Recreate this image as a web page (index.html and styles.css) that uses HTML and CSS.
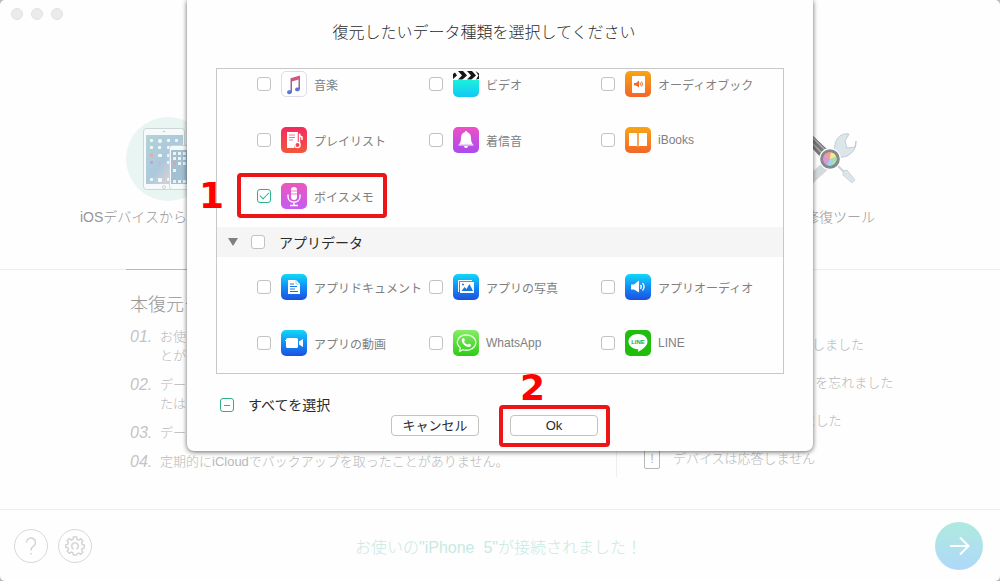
FILE: index.html
```html
<!DOCTYPE html>
<html lang="ja">
<head>
    <meta charset="UTF-8">
    <meta name="viewport" content="width=device-width, initial-scale=1.0">
    <title>復元したいデータ種類を選択してください</title>
    <link rel="stylesheet" href="styles.css">
</head>
<body>
    <div class="window">
        <header class="titlebar">
            <span class="dot"></span>
            <span class="dot"></span>
            <span class="dot"></span>
        </header>

        <nav class="modes">
            <a href="#device" class="mode active">
                <svg class="mode-icon" viewBox="0 0 84 84">
                    <defs>
                        <linearGradient id="screen" x1="0" y1="0" x2="1" y2="1">
                            <stop offset="0" stop-color="#b4d2d6"/>
                            <stop offset=".5" stop-color="#abc9dc"/>
                            <stop offset=".75" stop-color="#d3d0d6"/>
                            <stop offset="1" stop-color="#a9c4d8"/>
                        </linearGradient>
                    </defs>
                    <circle cx="42" cy="42" r="42" fill="#e9f5f3"/>
                    <rect x="17.500" y="11.500" width="41" height="61" rx="3" fill="#f7fafa" stroke="#ccd6d6"/>
                    <rect x="20" y="18" width="37" height="49" fill="url(#screen)"/>
                    <circle cx="38" cy="14.500" r=".7" fill="#9aa"/>
                    <circle cx="38" cy="70" r="1.500" fill="none" stroke="#ccd6d6"/>
                    <g fill="#f3fafa">
                        <rect x="24" y="22" width="3" height="3" rx="1"/><rect x="32" y="22" width="4" height="4" rx="2"/><rect x="41" y="22" width="3" height="3" rx="1"/><rect x="49" y="22" width="3" height="3" rx="1"/>
                        <rect x="24" y="29" width="3" height="3" rx="1"/><rect x="32" y="29" width="3" height="3" rx="1"/><rect x="41" y="29" width="3" height="3" rx="1"/>
                        <rect x="32" y="37" width="4" height="3" rx="1"/><rect x="41" y="37" width="3" height="3" rx="1"/><rect x="41" y="44" width="3" height="3" rx="1"/>
                        <rect x="24" y="61" width="3" height="3" rx="1"/><rect x="32" y="61" width="4" height="4" rx="1"/><rect x="41" y="61" width="3" height="3" rx="1"/>
                    </g>
                    <rect x="24" y="37" width="3" height="3" rx="1" fill="#e0a8b2"/>
                    <rect x="24" y="44" width="3" height="3" rx="1" fill="#b9a5d3"/>
                    <rect x="32" y="44" width="3" height="3" rx="1" fill="#c3b5dc"/>
                    <rect x="43.500" y="28.500" width="25" height="44" rx="3" fill="#f7fafa" stroke="#ccd6d6"/>
                    <rect x="45" y="33" width="22" height="34" fill="#a3bfd2"/>
                    <g fill="#e9f4f4">
                        <rect x="47" y="35" width="3" height="3"/><rect x="52" y="35" width="3" height="3"/><rect x="57" y="35" width="3" height="3"/>
                        <rect x="47" y="40" width="3" height="3"/><rect x="52" y="40" width="3" height="3"/><rect x="57" y="40" width="3" height="3"/>
                        <rect x="52" y="45" width="3" height="3"/><rect x="57" y="45" width="3" height="3"/><rect x="47" y="52" width="3" height="3"/>
                        <rect x="47" y="63" width="3" height="3"/><rect x="52" y="63" width="3" height="3"/><rect x="57" y="63" width="3" height="3"/>
                    </g>
                    <rect x="47" y="45" width="3" height="3" fill="#dfa2b0"/>
                </svg>
                <span>iOSデバイスから</span>
            </a>
            <a href="#repair" class="mode tools">
                <svg class="mode-icon" viewBox="0 0 84 84">
                    <path d="M14 20l7-5 21 20-7 8z" fill="#777"/>
                    <path d="M16 18l21 21M20 16l20 20" stroke="#aaa" stroke-width="1.500"/>
                    <path d="M14 70L53 35" stroke="#d3dade" stroke-width="9"/>
                    <path d="M47 35C45 25 51 15 61 17l-4 7 2 7 8-1 1-6C69 34 60 41 52 40z" fill="#dbe5ea" stroke="#b9c4ca" stroke-width=".8"/>
                    <path d="M48 47l9 9" stroke="#ccd4d8" stroke-width="2"/>
                    <path d="M55 54l4-1 8 10-3 3-9-8z" fill="#dce5e9" stroke="#c3cdd2" stroke-width=".8"/>
                    <circle cx="42" cy="42" r="11" fill="#fff"/>
                    <circle cx="42" cy="42" r="9.800" fill="#858a8d"/>
                    <circle cx="42" cy="42" r="6.500" fill="#f5dc8b"/>
                    <path d="M42 42L36 39a6.500 6.500 0 0 1 7-3.500z" fill="#f19aa0"/>
                    <path d="M42 42l1-6.500a6.500 6.500 0 0 1 5 4z" fill="#f5ec91"/>
                    <path d="M42 42l6-2.500a6.500 6.500 0 0 1-2 7.500z" fill="#a5dfb1"/>
                    <path d="M42 42l4 5a6.500 6.500 0 0 1-7 1z" fill="#9ad6ef"/>
                    <path d="M42 42l-3 6a6.500 6.500 0 0 1-3-9z" fill="#d798d9"/>
                </svg>
                <span>修復ツール</span>
            </a>
        </nav>

        <main class="content">
            <section class="guide">
                <h2>本復元モード</h2>
                <ol class="steps">
                    <li><em>01.</em><span>お使い<br>とが</span></li>
                    <li><em>02.</em><span>データ<br>たは</span></li>
                    <li><em>03.</em><span>データ</span></li>
                    <li><em>04.</em><span>定期的にiCloudでバックアップを取ったことがありません。</span></li>
                </ol>
            </section>
            <ul class="cases">
                <li class="update"><span class="case-icon"></span><span>失敗しました</span></li>
                <li><span class="case-icon"></span><span>スクリーンのパスワードを忘れました</span></li>
                <li><span class="case-icon"></span><span>デバイスはロックされました</span></li>
                <li><span class="case-icon">!</span><span>デバイスは応答しません</span></li>
            </ul>
        </main>

        <footer class="statusbar">
            <div class="tools-left">
                <button type="button" class="round" aria-label="ヘルプ">
                    <svg viewBox="0 0 20 20"><path d="M5.500 6.500a4.500 4.500 0 1 1 7 3.700c-1.700 1.100-2.500 1.700-2.500 4.300M10 17v1.500"/></svg>
                </button>
                <button type="button" class="round" aria-label="設定">
                    <svg viewBox="0 0 20 20"><path d="M8.500 1h3l.6 2.400 1.500.7L15.800 2.800l2 2.100-1.200 2.200.6 1.400 2.300.6v2.800l-2.300.7-.6 1.400 1.200 2.200-2 2-2.200-1.200-1.500.7L11.500 19h-3l-.6-2.300-1.500-.7-2.200 1.200-2-2L3.400 13l-.6-1.400L.5 11V8.800l2.300-.5.6-1.400-1.200-2.200 2-1.900 2.200 1.300 1.500-.7z"/><path d="M8.500 13a3.300 3.300 0 1 1 3 0"/></svg>
                </button>
            </div>
            <p class="status">お使いの"iPhone&nbsp; 5"が接続されました！</p>
            <button type="button" class="next" aria-label="次へ">
                <svg viewBox="0 0 24 24"><path d="M3 12h18M13 3.500l8.500 8.500-8.500 8.500"/></svg>
            </button>
        </footer>
    </div>

    <form class="dialog" role="dialog" aria-labelledby="dialog-title">
        <h1 id="dialog-title">復元したいデータ種類を選択してください</h1>

        <div class="types">
            <div class="grid">
                <label class="type">
                    <input type="checkbox">
                    <svg class="icon" viewBox="0 0 26 26">
                        <defs><linearGradient id="note" x1="0" y1="0" x2="0" y2="1"><stop offset="0" stop-color="#e9536b"/><stop offset=".5" stop-color="#9b5fa9"/><stop offset="1" stop-color="#3f7fe0"/></linearGradient></defs>
                        <rect x=".5" y=".5" width="25" height="25" rx="4.500" fill="#fff" stroke="#dcdcea"/>
                        <path d="M9.500 7.200L19 4.500v13.200c0 3.200-5 3.400-5 .8 0-1.800 2-2.300 3.500-2V8.500l-6.500 2v10.200c0 3.200-5 3.200-5 .6 0-1.800 2-2.300 3.500-2z" fill="url(#note)"/>
                    </svg>
                    <span>音楽</span>
                </label>
                <label class="type">
                    <input type="checkbox">
                    <svg class="icon" viewBox="0 0 26 26">
                        <defs><linearGradient id="cyan" x1="0" y1="0" x2="0" y2="1"><stop offset="0" stop-color="#1cf0dc"/><stop offset="1" stop-color="#10c8f6"/></linearGradient></defs>
                        <path d="M0 9h26v12a5 5 0 0 1-5 5H5a5 5 0 0 1-5-5z" fill="url(#cyan)"/>
                        <path d="M0 5a5 5 0 0 1 5-5h16a5 5 0 0 1 5 5v4H0z" fill="#fff"/>
                        <path d="M0 3l2-1.500L4 4.500 0 8zM5 0h5l4 4.500L9.500 8.500H5l4-4zM14 0h5l4 4.500-4.500 4H14l4-4zM22.500 0l3.500 2.500V8l-3 .5 2.500-4z" fill="#161616"/>
                    </svg>
                    <span>ビデオ</span>
                </label>
                <label class="type">
                    <input type="checkbox">
                    <svg class="icon" viewBox="0 0 26 26">
                        <defs><linearGradient id="orange" x1="0" y1="0" x2="0" y2="1"><stop offset="0" stop-color="#f9a514"/><stop offset="1" stop-color="#f2662a"/></linearGradient></defs>
                        <rect width="26" height="26" rx="5" fill="url(#orange)"/>
                        <rect x="7" y="5" width="13" height="17" rx="1" fill="#fff"/>
                        <path d="M9 12h2l3-2.500v7L11 14.500H9z" fill="#ee6b2a"/>
                        <path d="M15 11.500q1 1.500 0 3M16.500 10.500q2 2.500 0 5" fill="none" stroke="#ee6b2a"/>
                    </svg>
                    <span>オーディオブック</span>
                </label>
                <label class="type">
                    <input type="checkbox">
                    <svg class="icon" viewBox="0 0 26 26">
                        <defs><linearGradient id="red" x1="0" y1="0" x2="0" y2="1"><stop offset="0" stop-color="#f22b60"/><stop offset="1" stop-color="#f4563b"/></linearGradient></defs>
                        <rect width="26" height="26" rx="5" fill="url(#red)"/>
                        <path d="M6 5h11v11c-3 0-4 2-3.500 5H6z" fill="#fff"/>
                        <path d="M8 8h6M8 10.500h6M8 13h4" stroke="#f4788d"/>
                        <path d="M18.500 6v12" stroke="#f22f56" stroke-width="3.500"/>
                        <path d="M18.500 18V6.500q0 3 2.500 3.500v3" fill="none" stroke="#fff" stroke-width="1.500"/>
                        <circle cx="16.500" cy="18" r="2.600" fill="#f24450" stroke="#fff" stroke-width="1.300"/>
                    </svg>
                    <span>プレイリスト</span>
                </label>
                <label class="type">
                    <input type="checkbox">
                    <svg class="icon" viewBox="0 0 26 26">
                        <defs><linearGradient id="purple" x1="0" y1="0" x2="0" y2="1"><stop offset="0" stop-color="#ee50c5"/><stop offset="1" stop-color="#a94bf0"/></linearGradient></defs>
                        <rect width="26" height="26" rx="5" fill="url(#purple)"/>
                        <path d="M13 4c.8 0 1.200.6 1.200 1.300C17 6 18 8.500 18 11c0 3.500.8 5 2 6.500H6C7.200 16 8 14.500 8 11c0-2.500 1-5 3.800-5.700C11.800 4.600 12.200 4 13 4zM11 19h4c0 2.500-4 2.500-4 0z" fill="#fff"/>
                        <path d="M5.500 18h15" stroke="#fff"/>
                    </svg>
                    <span>着信音</span>
                </label>
                <label class="type">
                    <input type="checkbox">
                    <svg class="icon" viewBox="0 0 26 26">
                        <rect width="26" height="26" rx="5" fill="url(#orange)"/>
                        <path d="M4 6h7.500l1.500 1 1.500-1H22v13h-7.500l-1.500.8-1.500-.8H4z" fill="#fff"/>
                        <path d="M13 6.500V20" stroke="#f28a1f" stroke-width="1.500"/>
                    </svg>
                    <span>iBooks</span>
                </label>
                <label class="type marked">
                    <input type="checkbox" checked>
                    <svg class="icon" viewBox="0 0 26 26">
                        <defs><linearGradient id="pink" x1="0" y1="0" x2="0" y2="1"><stop offset="0" stop-color="#ea58bd"/><stop offset="1" stop-color="#c55cf2"/></linearGradient></defs>
                        <rect width="26" height="26" rx="5" fill="url(#pink)"/>
                        <rect x="10" y="4" width="6" height="13" rx="3" fill="#fff"/>
                        <path d="M10 8h6M10 11h6" stroke="#e65ac9" stroke-width=".8"/>
                        <path d="M7 11.500v2c0 7.500 12 7.500 12 0v-2M13 19v3.500M9 22.500h8" fill="none" stroke="#fff" stroke-width="1.400"/>
                    </svg>
                    <span>ボイスメモ</span>
                    <span class="frame"><b class="number">1</b></span>
                </label>
            </div>

            <div class="group">
                <span class="arrow"></span>
                <label><input type="checkbox">アプリデータ</label>
            </div>

            <div class="grid apps">
                <label class="type">
                    <input type="checkbox">
                    <svg class="icon" viewBox="0 0 26 26">
                        <defs><linearGradient id="blue" x1="0" y1="0" x2="0" y2="1"><stop offset="0" stop-color="#10d8fa"/><stop offset=".5" stop-color="#138df4"/><stop offset="1" stop-color="#1d50e0"/></linearGradient></defs>
                        <rect width="26" height="26" rx="5" fill="url(#blue)"/>
                        <path d="M7 6h8l4 4v10H7z" fill="#fff"/>
                        <path d="M15 6v4h4" fill="none" stroke="#8ccdf8" stroke-width=".8"/>
                        <path d="M9 10h4M9 12.500h7M9 15h5M9 17.500h8" stroke="#1976dd"/>
                    </svg>
                    <span>アプリドキュメント</span>
                </label>
                <label class="type">
                    <input type="checkbox">
                    <svg class="icon" viewBox="0 0 26 26">
                        <rect width="26" height="26" rx="5" fill="url(#blue)"/>
                        <path d="M5.500 18V6.500H19" fill="none" stroke="#fff"/>
                        <rect x="7" y="8" width="14" height="11" fill="#fff"/>
                        <path d="M8.500 17l3-4 2 2 3-5 3.500 7z" fill="#1878dc"/>
                        <circle cx="10" cy="10.500" r="1" fill="#1878dc"/>
                    </svg>
                    <span>アプリの写真</span>
                </label>
                <label class="type">
                    <input type="checkbox">
                    <svg class="icon" viewBox="0 0 26 26">
                        <rect width="26" height="26" rx="5" fill="url(#blue)"/>
                        <path d="M6 10.500h3L14 6.500v12L9 15.500H6z" fill="#fff"/>
                        <path d="M15.500 11q1.500 1.800 0 3.800M17.500 9q3 3.500 0 7.500" fill="none" stroke="#fff" stroke-width="1.300"/>
                    </svg>
                    <span>アプリオーディオ</span>
                </label>
                <label class="type">
                    <input type="checkbox">
                    <svg class="icon" viewBox="0 0 26 26">
                        <rect width="26" height="26" rx="5" fill="url(#blue)"/>
                        <rect x="5" y="8" width="12" height="10" rx="1.500" fill="#fff"/>
                        <path d="M18 11.500L22 9v8l-4-2.500z" fill="#fff"/>
                        <path d="M4 10.500h3" stroke="#fff"/>
                    </svg>
                    <span>アプリの動画</span>
                </label>
                <label class="type">
                    <input type="checkbox">
                    <svg class="icon" viewBox="0 0 26 26">
                        <defs><linearGradient id="green" x1="0" y1="0" x2="0" y2="1"><stop offset="0" stop-color="#86ed67"/><stop offset="1" stop-color="#2fcb18"/></linearGradient></defs>
                        <rect width="26" height="26" rx="5" fill="url(#green)"/>
                        <path d="M6.500 21.500l.8-3.700C1.500 13 5 5 13 5s12 6 8.500 11.500C19 20 14 21 10 19.700z" fill="none" stroke="#e4fbdc" stroke-width="1.300" stroke-linejoin="round"/>
                        <path d="M9.500 8.500c1-.8 1.600-.5 2.300 1.300.3.900-.8 1.300-.6 2 .7 1.400 1.700 2.300 3.200 2.800.8.200 1.100-1.100 1.900-.8 1.700.7 2.300 1.200 1.500 2.200-1.500 1.900-4.500.9-6.500-1-2.200-2-3.300-5-1.800-6.500z" fill="#fff"/>
                    </svg>
                    <span>WhatsApp</span>
                </label>
                <label class="type">
                    <input type="checkbox">
                    <svg class="icon" viewBox="0 0 26 26">
                        <rect width="26" height="26" rx="5" fill="#1fbd0c"/>
                        <path d="M13 4c5.500 0 9.500 3.200 9.500 7.500 0 4-4.500 7.500-9.500 10.500.5-1.700.5-2.500-.5-2.700C7.500 18.700 3.500 16 3.500 11.500 3.500 7.200 7.500 4 13 4z" fill="#fff"/>
                        <text x="13" y="14" class="line-text">LINE</text>
                    </svg>
                    <span>LINE</span>
                </label>
            </div>
        </div>

        <label class="select-all"><input type="checkbox" id="select-all">すべてを選択</label>

        <div class="actions">
            <button type="button" class="btn">キャンセル</button>
            <div class="confirm">
                <button type="submit" class="btn">Ok</button>
                <span class="frame"><b class="number">2</b></span>
            </div>
        </div>
    </form>

    <script>
        document.getElementById('select-all').indeterminate = true;
    </script>
</body>
</html>
```
FILE: styles.css
```css
:root {
    --text: #2a2a2a;
    --label: #808080;
    --faded: #b8b8b8;
    --line: #eeeeee;
    --green: #2fae8c;
    --mark: #ee1519;
}

* {
    box-sizing: border-box;
}

body {
    margin: 0;
    min-height: 100vh;
    position: relative;
    background-color: #bbbbbb;
    color: var(--text);
    font-family: "Liberation Sans", "Noto Sans CJK JP", sans-serif;
    font-size: 12px;
}

h1,
h2,
p,
ol,
ul {
    margin: 0;
    padding: 0;
    font-weight: 300;
    list-style: none;
}

button {
    padding: 0;
    font-family: inherit;
    cursor: pointer;
}

/* Main window */
.window {
    display: flex;
    flex-direction: column;
    min-height: 100vh;
    background-color: #fefefe;
    border-radius: 5px;
}

.titlebar {
    display: flex;
    gap: 8px;
    padding: 8px 11px;
}

.dot {
    width: 12px;
    height: 12px;
    border: 1px solid #e2e2e2;
    border-radius: 50%;
    background-color: #ebebeb;
}

.modes {
    display: flex;
    justify-content: space-between;
    padding: 89px 125px 0 80px;
    border-bottom: 1px solid var(--line);
}

.mode {
    display: flex;
    flex-direction: column;
    gap: 6px;
    width: 176px;
    height: 153px;
    margin-bottom: -1px;
    color: #969696;
    font-size: 14px;
    font-weight: 300;
    line-height: 20px;
    text-decoration: none;
}

.mode-icon {
    width: 84px;
    height: 84px;
    align-self: center;
}

.mode.active::after {
    content: "";
    width: 84px;
    height: 1px;
    margin: auto auto 0;
    background-color: #8fcdc3;
}

.mode.tools {
    width: 90px;
    text-align: right;
}

.content {
    flex: 1;
    display: flex;
    justify-content: space-between;
    padding: 23px 100px 32px 130px;
    color: var(--faded);
    font-size: 13px;
    font-weight: 300;
}

.guide h2 {
    color: #969696;
    font-size: 18px;
    line-height: 24px;
}

.steps {
    display: flex;
    flex-direction: column;
    gap: 10px;
    padding-top: 10px;
    line-height: 19px;
}

.steps li {
    display: flex;
}

.steps em {
    width: 30px;
    color: #c4c4c4;
    font-size: 16px;
}

.cases {
    display: flex;
    flex-direction: column;
    justify-content: flex-end;
    gap: 18px;
    width: 284px;
    padding: 0 0 8px 27px;
    border-left: 1px solid var(--line);
    line-height: 20px;
    white-space: nowrap;
}

.cases li {
    display: flex;
    gap: 13px;
}

.cases .update {
    width: 220px;
    justify-content: space-between;
}

.case-icon {
    width: 16px;
    height: 20px;
    border: 1px solid var(--faded);
    border-radius: 2px;
    line-height: 18px;
    text-align: center;
}

.statusbar {
    display: grid;
    grid-template-columns: 1fr auto 1fr;
    align-items: center;
    height: 72px;
    padding: 0 17px 0 14px;
    border-top: 1px solid var(--line);
}

.tools-left {
    display: flex;
    gap: 10px;
}

.round {
    display: flex;
    align-items: center;
    justify-content: center;
    width: 34px;
    height: 34px;
    border: 1px solid #d8d8d8;
    border-radius: 50%;
    background: none;
}

.round svg {
    width: 20px;
    height: 20px;
    fill: none;
    stroke: #d4d4d4;
    stroke-width: 1.5;
}

.status {
    color: #c8e9e2;
    font-size: 16px;
}

.next {
    display: flex;
    align-items: center;
    justify-content: center;
    justify-self: end;
    width: 48px;
    height: 48px;
    border: none;
    border-radius: 50%;
    background: linear-gradient(#aeeade, #afd8fa);
}

.next svg {
    width: 24px;
    height: 24px;
    fill: none;
    stroke: #ffffff;
    stroke-width: 2;
}

/* Dialog sheet */
.dialog {
    position: absolute;
    top: 0;
    left: 187px;
    right: 187px;
    padding: 21px 29px 15px;
    background-color: #fefefe;
    border-radius: 0 0 7px 7px;
    box-shadow: 0 1px 5px rgba(0, 0, 0, 0.6);
}

.dialog h1 {
    padding: 0 32px 23px 0;
    font-size: 16px;
    line-height: 24px;
    text-align: center;
}

.types {
    border: 1px solid #c8c8c8;
}

.grid {
    display: grid;
    grid-template-columns: repeat(3, 1fr);
    row-gap: 30px;
    padding: 2px 10px 18px 40px;
}

.grid.apps {
    padding-top: 17px;
    padding-bottom: 17px;
}

.type {
    position: relative;
    display: flex;
    align-items: center;
    color: var(--label);
    white-space: nowrap;
}

.icon {
    width: 26px;
    height: 26px;
    margin: 0 7px 0 10px;
}

.line-text {
    fill: #1fae0c;
    font-size: 6px;
    font-weight: bold;
    text-anchor: middle;
}

input[type="checkbox"] {
    appearance: none;
    display: flex;
    align-items: center;
    justify-content: center;
    width: 14px;
    height: 14px;
    margin: 0;
    border: 1px solid #c2c2c2;
    border-radius: 3px;
    background-color: #ffffff;
}

input[type="checkbox"]:checked,
input[type="checkbox"]:indeterminate {
    border-color: var(--green);
}

input[type="checkbox"]:checked::after {
    content: "";
    width: 8px;
    height: 4px;
    margin-bottom: 3px;
    border: solid var(--green);
    border-width: 0 0 1px 1px;
    transform: rotate(-45deg);
}

input[type="checkbox"]:indeterminate::after {
    content: "";
    width: 6px;
    height: 1px;
    background-color: var(--green);
}

.group {
    display: flex;
    align-items: center;
    gap: 13px;
    height: 30px;
    padding-left: 11px;
    background-color: #f5f5f5;
    font-size: 14px;
}

.group label,
.select-all {
    display: flex;
    align-items: center;
    gap: 14px;
}

.arrow {
    border: 5px solid transparent;
    border-top: 8px solid #808080;
    border-bottom: none;
}

.select-all {
    padding: 21px 0 0 4px;
    font-size: 14px;
    line-height: 20px;
}

.actions {
    display: flex;
    justify-content: center;
    gap: 31px;
    padding-right: 11px;
}

.btn {
    display: block;
    width: 88px;
    height: 21px;
    border: 1px solid #c6c2c0;
    border-radius: 4px;
    background-color: #ffffff;
    color: var(--text);
    font-size: 13px;
    line-height: 19px;
}

.confirm {
    position: relative;
}

/* Numbered highlights */
.frame {
    position: absolute;
    top: -10px;
    left: -20px;
    width: 150px;
    height: 45px;
    border: 4px solid var(--mark);
    border-radius: 4px;
    pointer-events: none;
}

.number {
    position: absolute;
    top: 1px;
    left: -42px;
    color: #ff0000;
    font-family: "DejaVu Sans", sans-serif;
    font-size: 36px;
    line-height: 36px;
}

.confirm .frame {
    left: -11px;
    width: 111px;
    height: 42px;
}

.confirm .number {
    top: -39px;
    left: 17px;
}
```
